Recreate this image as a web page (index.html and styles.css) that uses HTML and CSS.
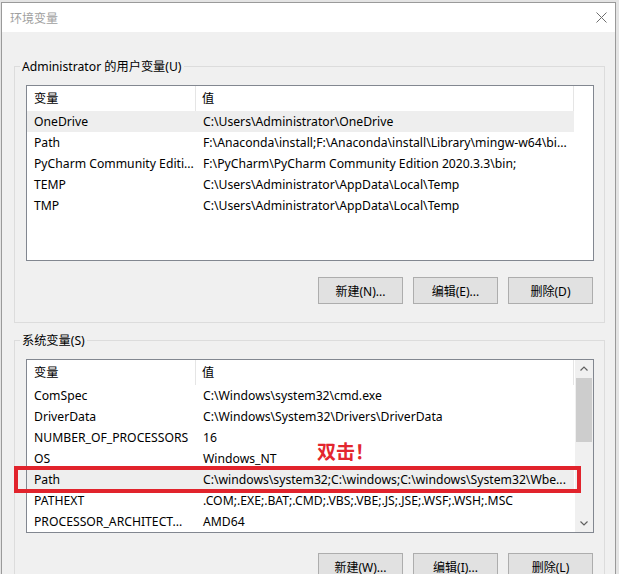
FILE: index.html
```html
<!DOCTYPE html>
<html lang="zh-CN">
<head>
<meta charset="utf-8">
<title>环境变量</title>
<link rel="stylesheet" href="styles.css">
</head>
<body>
<div class="dialog">
  <div class="titlebar">
    <span class="title">环境变量</span>
    <svg class="close" width="11" height="11" viewBox="0 0 11 11"><path d="M0.5 0.5L10.5 10.5M10.5 0.5L0.5 10.5" stroke="#6e6e6e" stroke-width="1" fill="none"/></svg>
  </div>
  <div class="content">
    <section class="group group-user">
      <div class="group-label">Administrator 的用户变量(U)</div>
      <div class="listview lv-user">
        <div class="lv-main">
          <div class="lv-header"><div class="hcell">变量</div><div class="hcell">值</div></div>
          <div class="row selected"><div class="cell">OneDrive</div><div class="cell">C:\Users\Administrator\OneDrive</div></div>
          <div class="row"><div class="cell">Path</div><div class="cell">F:\Anaconda\install;F:\Anaconda\install\Library\mingw-w64\bi...</div></div>
          <div class="row"><div class="cell">PyCharm Community Editi...</div><div class="cell">F:\PyCharm\PyCharm Community Edition 2020.3.3\bin;</div></div>
          <div class="row"><div class="cell">TEMP</div><div class="cell">C:\Users\Administrator\AppData\Local\Temp</div></div>
          <div class="row"><div class="cell">TMP</div><div class="cell">C:\Users\Administrator\AppData\Local\Temp</div></div>
        </div>
        <div class="vspace"></div>
      </div>
      <div class="buttons buttons-user">
        <button class="btn">新建(N)...</button>
        <button class="btn">编辑(E)...</button>
        <button class="btn">删除(D)</button>
      </div>
    </section>

    <section class="group group-system">
      <div class="group-label">系统变量(S)</div>
      <div class="listview lv-system">
        <div class="lv-main">
          <div class="lv-header"><div class="hcell">变量</div><div class="hcell">值</div></div>
          <div class="row"><div class="cell">ComSpec</div><div class="cell">C:\Windows\system32\cmd.exe</div></div>
          <div class="row"><div class="cell">DriverData</div><div class="cell">C:\Windows\System32\Drivers\DriverData</div></div>
          <div class="row"><div class="cell">NUMBER_OF_PROCESSORS</div><div class="cell">16</div></div>
          <div class="row"><div class="cell">OS</div><div class="cell">Windows_NT</div></div>
          <div class="row selected marked"><div class="cell">Path</div><div class="cell">C:\windows\system32;C:\windows;C:\windows\System32\Wbe...</div><span class="mark-box"></span></div>
          <div class="row"><div class="cell">PATHEXT</div><div class="cell">.COM;.EXE;.BAT;.CMD;.VBS;.VBE;.JS;.JSE;.WSF;.WSH;.MSC</div></div>
          <div class="row"><div class="cell">PROCESSOR_ARCHITECT...</div><div class="cell">AMD64</div></div>
        </div>
        <div class="vscroll">
          <div class="sb-arrow"><svg width="8" height="5" viewBox="0 0 8 5"><path d="M0.5 4.5L4 1L7.5 4.5" stroke="#606060" stroke-width="1.2" fill="none"/></svg></div>
          <div class="sb-track"><div class="sb-thumb"></div></div>
          <div class="sb-arrow"><svg width="8" height="5" viewBox="0 0 8 5"><path d="M0.5 0.5L4 4L7.5 0.5" stroke="#606060" stroke-width="1.2" fill="none"/></svg></div>
        </div>
        <span class="mark-text">双击！</span>
      </div>
      <div class="buttons buttons-system">
        <button class="btn">新建(W)...</button>
        <button class="btn">编辑(I)...</button>
        <button class="btn">删除(L)</button>
      </div>
    </section>
  </div>
</div>
</body>
</html>
```

FILE: styles.css
```css
html, body {
  margin: 0;
  overflow: hidden;
}
body {
  background: #e4e4e4;
  font-family: "Noto Sans", "Noto Sans CJK SC", sans-serif;
  font-size: 12.2px;
  color: #000;
}
.dialog {
  margin: 2px 0 0 1px;
  width: 615px;
  height: 620px;
  box-sizing: border-box;
  border: 1px solid #9a9a9a;
  background: #f0f0f0;
}
.titlebar {
  height: 29px;
  background: #fff;
  display: flex;
  align-items: center;
  justify-content: space-between;
  padding: 0 8px;
}
.title {
  color: #a0a0a0;
  font-family: "Noto Sans CJK SC", sans-serif;
  font-size: 12px;
  line-height: 16px;
}
.close { display: block; }
.content {
  padding: 34px 10px 0 12px;
}
.group {
  border: 1px solid #dcdcdc;
  padding: 0 10px 18px 11px;
}
.group-system { margin-top: 17px; }
.group-label {
  margin: -8px 0 0 -6px;
  padding: 0 2px;
  line-height: 16px;
  background: #f0f0f0;
  width: max-content;
}
.listview {
  position: relative;
  margin-top: 10px;
  border: 1px solid #828790;
  background: #fff;
  display: flex;
  box-sizing: border-box;
}
.lv-user { height: 176px; }
.lv-system { height: 174px; }
.lv-main { width: 547px; }
.lv-header {
  display: grid;
  grid-template-columns: 169px 378px;
  height: 25px;
}
.hcell {
  display: flex;
  align-items: center;
  padding-left: 7px;
  border-right: 1px solid #e5e5e5;
  line-height: 16px;
}
.hcell + .hcell { padding-left: 6px; }
.row {
  position: relative;
  display: grid;
  grid-template-columns: 169px 378px;
  height: 21px;
  align-items: center;
}
.row.selected { background: #eeeeee; }
.cell {
  padding-left: 7px;
  white-space: nowrap;
  overflow: hidden;
  line-height: 16px;
}
.vspace { flex: 1; }
.vscroll {
  flex: 1;
  display: flex;
  flex-direction: column;
  background: #f0f0f0;
  margin-left: 1px;
}
.sb-arrow {
  height: 17px;
  display: flex;
  align-items: center;
  justify-content: center;
}
.sb-arrow svg { display: block; }
.sb-track { flex: 1; }
.sb-thumb {
  margin: 1px 1px 0 1px;
  height: 64px;
  background: #cdcdcd;
}
.mark-box {
  position: absolute;
  left: -13px;
  top: -3px;
  width: 567px;
  height: 27px;
  box-sizing: border-box;
  border: 4px solid #e1232c;
}
.mark-text {
  position: absolute;
  left: 290px;
  top: 80px;
  font-family: "Noto Sans CJK SC", sans-serif;
  font-weight: bold;
  font-size: 19px;
  line-height: 22px;
  color: #e3262e;
}
.buttons {
  display: flex;
  justify-content: flex-end;
  gap: 10px;
  padding-right: 1px;
}
.buttons-user { margin-top: 16px; }
.buttons-system { margin-top: 20px; }
.btn {
  width: 85px;
  height: 27px;
  box-sizing: border-box;
  border: 1px solid #adadad;
  background: #e1e1e1;
  font-family: "Noto Sans", "Noto Sans CJK SC", sans-serif;
  font-size: 12px;
  color: #000;
  padding: 0;
}
```
